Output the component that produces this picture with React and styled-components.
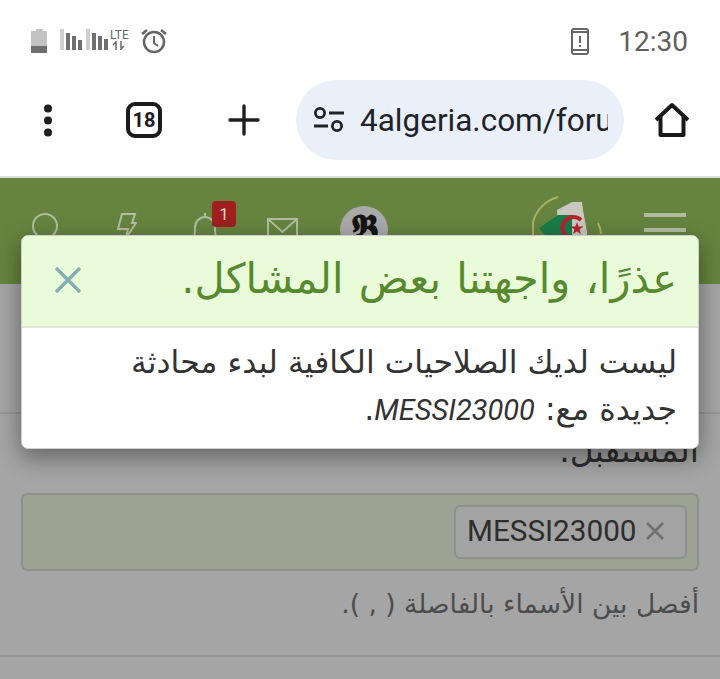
import React from 'react';
import styled, { createGlobalStyle } from 'styled-components';

const Global = createGlobalStyle`
  html, body { margin: 0; padding: 0; background: #a5a5a5; }
  body { width: 720px; height: 679px; overflow: hidden; font-family: Roboto, "DejaVu Sans", sans-serif; }
`;

const Screen = styled.div`
  position: relative;
  width: 720px;
  height: 679px;
  overflow: hidden;
  background: #a5a5a5;
`;

const StatusBar = styled.div`
  height: 80px;
  background: #fff;
  display: flex;
  align-items: center;
  justify-content: space-between;
  padding: 2px 32px 0 31px;
  box-sizing: border-box;
`;

const StatusGroup = styled.div`
  display: flex;
  align-items: center;
  gap: ${p => p.$gap || 0}px;
`;

const Clock = styled.span`
  font-family: Roboto, sans-serif;
  font-size: 28px;
  color: #5f5f5f;
`;

const Toolbar = styled.div`
  height: 96px;
  background: #fff;
  display: flex;
  align-items: flex-start;
  box-sizing: border-box;
`;

const ToolSlot = styled.div`
  width: ${p => p.$w}px;
  height: 80px;
  display: flex;
  align-items: center;
  justify-content: center;
  flex-shrink: 0;
`;

const UrlPill = styled.div`
  width: 328px;
  height: 80px;
  border-radius: 40px;
  background: #eaf0f9;
  display: flex;
  align-items: center;
  padding-left: 17px;
  box-sizing: border-box;
  gap: 15px;
  flex-shrink: 0;
`;

const UrlText = styled.div`
  width: 248px;
  overflow: hidden;
  white-space: nowrap;
  font-family: Roboto, sans-serif;
  font-size: 31.5px;
  color: #1f2328;
`;

const TabCount = styled.div`
  width: 36px;
  height: 36px;
  box-sizing: border-box;
  border: 4px solid #1c1c1c;
  border-radius: 9px;
  display: flex;
  align-items: center;
  justify-content: center;
  font-family: Roboto, sans-serif;
  font-weight: 700;
  font-size: 20px;
  color: #1c1c1c;
`;

const Divider = styled.div`
  height: 2px;
  background: #dcdcdc;
`;

const SiteHeader = styled.header`
  height: 106px;
  background: #66843f;
  display: flex;
  align-items: flex-start;
  padding-top: 18px;
  box-sizing: border-box;
`;

const HeaderIcons = styled.div`
  display: flex;
  align-items: flex-start;
  padding-left: 32px;
`;

const HeaderIcon = styled.div`
  position: relative;
  width: ${p => p.$w}px;
  margin-top: 17px;
`;

const Badge = styled.span`
  position: absolute;
  left: 20px;
  top: -12px;
  width: 24px;
  height: 26px;
  border-radius: 4px;
  background: #a01f1f;
  color: #e8d0d0;
  font-family: Roboto, sans-serif;
  font-size: 17px;
  text-align: center;
  line-height: 26px;
`;

const Avatar = styled.div`
  width: 48px;
  height: 48px;
  border-radius: 50%;
  background: #a9a9a9;
  color: #141414;
  font-family: "DejaVu Serif", "Liberation Serif", serif;
  font-weight: 700;
  font-size: 38px;
  line-height: 46px;
  text-align: center;
  margin-top: 10px;
`;

const Logo = styled.div`
  margin-left: 144px;
  width: 70px;
`;

const Burger = styled.div`
  margin-left: 42px;
  margin-top: 17px;
  width: 42px;
  display: flex;
  flex-direction: column;
  gap: 11px;
  span {
    display: block;
    height: 4px;
    background: #b2bda0;
  }
`;

const Content = styled.main`
  padding: 128px 21px 0;
  direction: rtl;
  font-family: "DejaVu Sans", sans-serif;
`;

const Rule = styled.div`
  height: 2px;
  background: #969696;
  margin: 0 -21px;
`;

const Recipient = styled.div`
  margin-top: 18px;
  height: 61px;
  font-size: 33px;
  line-height: 38px;
  color: #2e2e2e;
`;

const TagField = styled.div`
  height: 78px;
  box-sizing: border-box;
  border: 2px solid #8e8e8e;
  border-radius: 6px;
  background: #9ca392;
  display: flex;
  align-items: center;
  padding: 0 10px;
`;

const Tag = styled.div`
  direction: ltr;
  display: flex;
  align-items: center;
  gap: 9px;
  height: 54px;
  width: 233px;
  box-sizing: border-box;
  border: 2px solid #8f8f8f;
  border-radius: 6px;
  background: #a3a3a3;
  padding: 0 0 3px 11px;
  font-family: Roboto, sans-serif;
  font-size: 29.7px;
  color: #2d2d2d;
  white-space: nowrap;
`;

const Hint = styled.div`
  margin-top: 15px;
  height: 69px;
  font-size: 26.5px;
  line-height: 36px;
  color: #4c4c4c;
`;

const Dialog = styled.div`
  position: absolute;
  left: 21px;
  top: 235px;
  width: 678px;
  height: 214px;
  box-sizing: border-box;
  background: #fff;
  border: 1px solid #cfcfcf;
  border-radius: 7px;
  box-shadow: 0 8px 24px rgba(0, 0, 0, 0.42);
  overflow: hidden;
  direction: rtl;
  font-family: "DejaVu Sans", sans-serif;
`;

const DialogHead = styled.div`
  height: 92px;
  box-sizing: border-box;
  background: #e9fbd9;
  border-bottom: 2px solid #dfe4da;
  display: flex;
  align-items: center;
  justify-content: space-between;
  padding: 0 21px 6px 33px;
`;

const DialogTitle = styled.h2`
  margin: 0;
  font-weight: 400;
  font-size: 41.5px;
  word-spacing: 2px;
  color: #578a30;
  white-space: nowrap;
`;

const CloseBtn = styled.button`
  border: 0;
  background: none;
  padding: 0;
  margin-top: 4px;
  display: flex;
  color: #85afb4;
`;

const DialogBody = styled.div`
  padding: 11px 21px 0 60px;
  font-size: 31.5px;
  line-height: 47px;
  color: #333;
  em { font-family: Roboto, sans-serif; font-size: 29px; }
`;

function Ic({ w, h, children, sw = 2 }) {
  return (
    <svg width={w} height={h} viewBox={`0 0 ${w} ${h}`} fill="none" stroke="#b2bda0" strokeWidth={sw}>
      {children}
    </svg>
  );
}

export default function App() {
  return (
    <Screen>
      <Global />
      <StatusBar>
        <StatusGroup $gap={12}>
          <svg width="17" height="25" viewBox="0 0 17 25">
            <path d="M5 0h7v2h3a1 1 0 0 1 1 1v16H0V3a1 1 0 0 1 1-1h4z" fill="#c2c2c2" />
            <path d="M0 17h16v7H0z" fill="#6e6e6e" />
          </svg>
          <svg width="70" height="26" viewBox="0 0 70 26">
            <path d="M0 1h4v21H0zM26 1h4v21h-4z" fill="#cfcfcf" />
            <path d="M6 5h4v17H6zM12 8h4v14h-4zM18 12h4v10h-4zM32 5h4v17h-4zM38 8h4v14h-4zM44 11h4v11h-4z" fill="#6f6f6f" />
            <text x="50" y="11" fontFamily="Roboto, sans-serif" fontSize="12" fill="#6a6a6a">LTE</text>
            <path d="M56 13v9M53 17l3-3M61 13v9M61 21l3-3" stroke="#6a6a6a" strokeWidth="1.5" fill="none" />
          </svg>
          <svg width="26" height="26" viewBox="0 0 26 26" fill="none" stroke="#666" strokeWidth="2.5" style={{ marginLeft: -1 }}>
            <circle cx="13" cy="14" r="10" />
            <path d="M13 8v7l4 3" strokeWidth="2" />
            <path d="M1 6l5-4M25 6l-5-4" />
          </svg>
        </StatusGroup>
        <StatusGroup $gap={29}>
          <svg width="18" height="27" viewBox="0 0 18 27" fill="none">
            <rect x="1" y="1" width="16" height="25" rx="2" stroke="#666" strokeWidth="2" />
            <path d="M1 4h16M1 22h16" stroke="#666" strokeWidth="2" />
            <path d="M8 8h2v7H8zM8 17h2v2H8z" fill="#666" />
          </svg>
          <Clock>12:30</Clock>
        </StatusGroup>
      </StatusBar>

      <Toolbar>
        <ToolSlot $w={96}>
          <svg width="10" height="33" viewBox="0 0 10 33" fill="#1f1f1f">
            <circle cx="5" cy="4.5" r="4" />
            <circle cx="5" cy="16.5" r="4" />
            <circle cx="5" cy="28.5" r="4" />
          </svg>
        </ToolSlot>
        <ToolSlot $w={96}>
          <TabCount>18</TabCount>
        </ToolSlot>
        <ToolSlot $w={104}>
          <svg width="32" height="32" viewBox="0 0 32 32" stroke="#1f1f1f" strokeWidth="3.4" strokeLinecap="round">
            <path d="M16 2v28M2 16h28" />
          </svg>
        </ToolSlot>
        <UrlPill>
          <svg width="32" height="26" viewBox="0 0 32 26" fill="none" stroke="#1f2328" strokeWidth="2.8">
            <circle cx="7" cy="6" r="4.6" />
            <circle cx="24" cy="19" r="4.6" />
            <path d="M16 6h15M1 19h14" />
          </svg>
          <UrlText>4algeria.com/forum</UrlText>
        </UrlPill>
        <ToolSlot $w={96}>
          <svg width="36" height="36" viewBox="0 0 36 36" fill="none" stroke="#1a1a1a" strokeWidth="4" strokeLinejoin="round">
            <path d="M2 18L18 3l16 15" />
            <path d="M6.5 15v18h23V15" />
          </svg>
        </ToolSlot>
      </Toolbar>

      <Divider />

      <SiteHeader>
        <HeaderIcons>
          <HeaderIcon $w={85}>
            <Ic w={26} h={26}><circle cx="13" cy="13" r="12" /></Ic>
          </HeaderIcon>
          <HeaderIcon $w={75}>
            <Ic w={20} h={26}><path d="M5 1h13l-3 9h4L9 25l2-9H1z" /></Ic>
          </HeaderIcon>
          <HeaderIcon $w={75}>
            <Ic w={26} h={26}><path d="M1 26c2-3 2-7 2-11C3 9 7 4 13 4s10 5 10 11c0 4 0 8 2 11M13 4V0" /></Ic>
            <Badge>1</Badge>
          </HeaderIcon>
          <HeaderIcon $w={73}>
            <Ic w={31} h={26}><path d="M1 6h29v20H1zM1 6l14.5 13L30 6" /></Ic>
          </HeaderIcon>
          <Avatar>𝕭</Avatar>
        </HeaderIcons>
        <Logo>
          <svg width="70" height="40" viewBox="0 0 70 40" fill="none">
            <path d="M26 1A35 35 0 0 0 1 26V40" stroke="#a9b25c" strokeWidth="2" />
            <path d="M66 27Q69 33 69 38" stroke="#a9b25c" strokeWidth="2" />
            <path d="M40 6L50 6 51 14 55 36V40H26L25 14z" fill="#c8c8c0" />
            <path d="M7 32L26 19 40 19V40H14z" fill="#197b4a" />
            <path d="M49 24A11 11 0 1 0 49 40" stroke="#b3242c" strokeWidth="4" />
            <path d="M45 26l1.6 4.5h4.8l-3.8 3 1.4 4.6-4-2.8-4 2.8 1.4-4.6-3.8-3h4.8z" fill="#b3242c" />
          </svg>
        </Logo>
        <Burger><span /><span /></Burger>
      </SiteHeader>

      <Content>
        <Rule />
        <Recipient>المستقبل.</Recipient>
        <TagField>
          <Tag>
            MESSI23000
            <svg width="18" height="18" viewBox="0 0 18 18" stroke="#6f6f6f" strokeWidth="2.5">
              <path d="M1 1l16 16M17 1L1 17" />
            </svg>
          </Tag>
        </TagField>
        <Hint>أفصل بين الأسماء بالفاصلة ( , ).</Hint>
        <Rule />
      </Content>

      <Dialog>
        <DialogHead>
          <DialogTitle>عذرًا، واجهتنا بعض المشاكل.</DialogTitle>
          <CloseBtn>
            <svg width="26" height="26" viewBox="0 0 26 26" stroke="currentColor" strokeWidth="3.5">
              <path d="M1 1l24 24M25 1L1 25" />
            </svg>
          </CloseBtn>
        </DialogHead>
        <DialogBody>
          ليست لديك الصلاحيات الكافية لبدء محادثة جديدة مع: <em>MESSI23000</em>.
        </DialogBody>
      </Dialog>
    </Screen>
  );
}
